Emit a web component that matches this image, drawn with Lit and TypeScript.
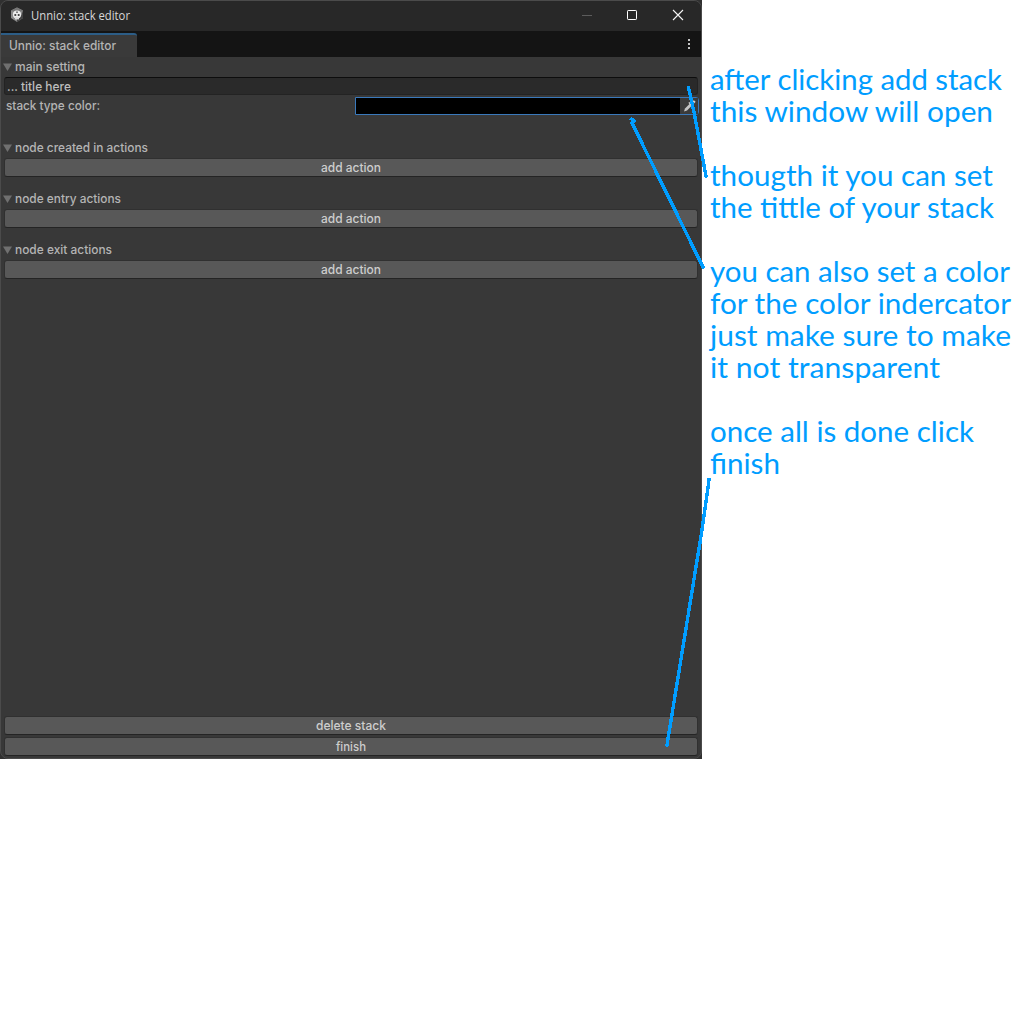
import { LitElement, html, svg, css } from "lit";
import { customElement, property } from "lit/decorators.js";

@customElement("fit-text")
class FitText extends LitElement {
  @property() text = "";
  @property({ type: Number }) width = 100;
  @property({ type: Number }) baseline = 12;

  static styles = css`
    :host { display: block; }
    svg { display: block; width: 100%; height: 100%; overflow: visible; }
    text { fill: currentColor; white-space: pre; }
  `;

  render() {
    return html`<svg>${svg`<text x="0" y=${this.baseline} textLength=${this.width} lengthAdjust="spacingAndGlyphs">${this.text}</text>`}</svg>`;
  }
}

@customElement("stack-window")
class StackWindow extends LitElement {
  static styles = css`
    :host { display: block; width: 702px; height: 759px; background: #303030; }
    * { box-sizing: border-box; }
    .window {
      width: 702px; height: 759px; display: flex; flex-direction: column;
      background: #383838; border: 1px solid #4b4b4b; border-radius: 8px;
      overflow: hidden; color: #b4b4b4;
      font: 500 12.5px/18px Inter, "Liberation Sans", sans-serif;
    }
    .titlebar { height: 30px; flex: none; display: flex; align-items: center; background: #282828; color: #d8d8d8; padding-left: 8px; }
    .logo { width: 16px; height: 16px; margin: 0 6px 2px 0; }
    .title { height: 18px; width: 100px; font: 12px "Open Sans", "Noto Sans", sans-serif; }
    .controls { margin-left: auto; display: flex; }
    .controls svg { width: 46px; height: 30px; display: block; }
    .tabs { height: 26px; flex: none; display: flex; align-items: flex-end; background: #141414; }
    .tab { width: 136px; height: 24px; background: #3a3a3a; border-top: 2px solid #2c5d87; border-radius: 0 3px 0 0; padding: 2px 0 0 8px; }
    .tab fit-text, .head fit-text { height: 18px; }
    .kebab { margin-left: auto; width: 24px; height: 26px; }
    .body { flex: 1; display: flex; flex-direction: column; padding: 0 3px 2px; }
    .head { height: 20px; display: flex; align-items: flex-start; }
    .head svg { width: 9px; height: 8px; margin: 6px 3px 0 -1px; flex: none; }
    .input { height: 18px; background: #2a2a2a; border: 1px solid #232323; border-top-color: #0d0d0d; border-radius: 3px; padding-left: 2px; color: #bdbdbd; line-height: 17px; }
    .input fit-text { height: 16px; }
    .color { display: flex; margin-top: 2px; height: 18px; }
    .label { width: 351px; padding-left: 2px; flex: none; }
    .swatch { width: 344px; flex: none; height: 18px; display: flex; justify-content: flex-end; background: #000; border: 1px solid #3a79bb; border-radius: 0 3px 3px 0; }
    .swatch svg { width: 18px; height: 16px; background: #3b3b3b; }
    .section { height: 51px; }
    .first { margin-top: 23px; }
    .button { height: 19px; background: #585858; border: 1px solid #303030; border-bottom-color: #242424; border-radius: 3px; color: #cdcdcd; display: flex; justify-content: center; }
    .footer { margin-top: auto; display: flex; flex-direction: column; gap: 2px; }
  `;

  private heading(text: string, width: number) {
    return html`<div class="head">
      <svg viewBox="0 0 9 8"><path d="M0 0.5H9L4.5 8Z" fill="#707070" /></svg>
      <fit-text .text=${text} .width=${width} .baseline=${13.5}></fit-text>
    </div>`;
  }

  private button(text: string, width: number) {
    return html`<div class="button"><fit-text style="width:${width}px" .text=${text} .width=${width} .baseline=${13}></fit-text></div>`;
  }

  private section(text: string, width: number, first = false) {
    return html`<div class="section ${first ? "first" : ""}">
      ${this.heading(text, width)}${this.button("add action", 60)}
    </div>`;
  }

  render() {
    return html`<div class="window">
      <div class="titlebar">
        <svg class="logo" viewBox="0 0 16 16">
          <path d="M8 0.5L14 3.5V11L8 15L2 11V3.5Z" fill="#8a8a8a" />
          <path d="M8 0.5L14 3.5L8 6L2 3.5Z" fill="#777" />
          <path d="M14 3.5V11L8 15V12L12 9Z" fill="#444" />
          <circle cx="8" cy="7.6" r="4.1" fill="#ececec" />
          <rect x="6" y="10" width="4" height="2.4" fill="#dcdcdc" />
          <circle cx="6.3" cy="8" r="1.1" fill="#3a3a3a" />
          <circle cx="9.7" cy="8" r="1.1" fill="#3a3a3a" />
          <circle cx="8" cy="5.2" r="0.9" fill="#666" />
        </svg>
        <fit-text class="title" .text=${"Unnio: stack editor"} .width=${99} .baseline=${13}></fit-text>
        <div class="controls">
          <svg viewBox="0 0 46 30"><path d="M19 14.5H29" stroke="#5c5c5c" /></svg>
          <svg viewBox="0 0 46 30"><rect x="18.5" y="9.5" width="9" height="9" rx="0.7" fill="none" stroke="#fff" /></svg>
          <svg viewBox="0 0 46 30"><path d="M18 9L28 19M28 9L18 19" stroke="#f4f4f4" stroke-width="1.1" /></svg>
        </div>
      </div>
      <div class="tabs">
        <div class="tab"><fit-text .text=${"Unnio: stack editor"} .width=${107} .baseline=${13}></fit-text></div>
        <svg class="kebab" viewBox="0 0 24 26"><path d="M11 8h2v2h-2zM11 12h2v2h-2zM11 16h2v2h-2z" fill="#c4c4c4" /></svg>
      </div>
      <div class="body">
        ${this.heading("main setting", 70)}
        <div class="input"><fit-text .text=${"... title here"} .width=${64} .baseline=${13}></fit-text></div>
        <div class="color">
          <div class="label"><fit-text .text=${"stack type color:"} .width=${94} .baseline=${13}></fit-text></div>
          <div class="swatch">
            <svg viewBox="0 0 18 16">
              <path d="M4 13.5L5 10.5L10 5.5L12 7.5L7 12.5Z" fill="#c4c4c4" />
              <path d="M9 4L11 5L13 2.5Q15.5 2 15.5 4L13 6.5L14 8.5L12.5 9L8.5 5Z" fill="#d0d0d0" />
            </svg>
          </div>
        </div>
        ${this.section("node created in actions", 133, true)}
        ${this.section("node entry actions", 106)}
        ${this.section("node exit actions", 97)}
        <div class="footer">${this.button("delete stack", 70)}${this.button("finish", 30)}</div>
      </div>
    </div>`;
  }
}

const NOTES: [string, number][] = [
  ["after clicking add stack", 292],
  ["this window will open", 283],
  ["", 0],
  ["thougth it you can set", 283],
  ["the tittle of your stack", 284],
  ["", 0],
  ["you can also set a color", 300],
  ["for the color indercator", 301],
  ["just make sure to make", 301],
  ["it not transparent", 230],
  ["", 0],
  ["once all is done click", 264],
  ["finish", 70],
];

@customElement("app-root")
class AppRoot extends LitElement {
  static styles = css`
    :host { display: block; width: 1032px; height: 1032px; background: #fff; position: relative; overflow: hidden; }
    .page { display: flex; align-items: flex-start; }
    .notes { padding: 64px 0 0 8px; color: #009dff; font: 29.5px/32px Lato, "Open Sans", sans-serif; }
    .note { height: 32px; }
    .arrows { position: absolute; inset: 0; pointer-events: none; }
  `;

  render() {
    return html`
      <div class="page">
        <stack-window></stack-window>
        <div class="notes">
          ${NOTES.map(([text, width]) => html`<div class="note">
            ${text ? html`<fit-text class="note" .text=${text} .width=${width} .baseline=${26.4}></fit-text>` : ""}
          </div>`)}
        </div>
      </div>
      <svg class="arrows" width="1032" height="1032" fill="none" stroke="#009dff" stroke-width="3.4" stroke-linecap="square" shape-rendering="crispEdges">
        <path d="M688.5 87.5L694 112L706 176" />
        <path d="M631.5 119L634 121L632 123L703 267" />
        <path d="M709 480L702 530L667 745" />
      </svg>
    `;
  }
}
